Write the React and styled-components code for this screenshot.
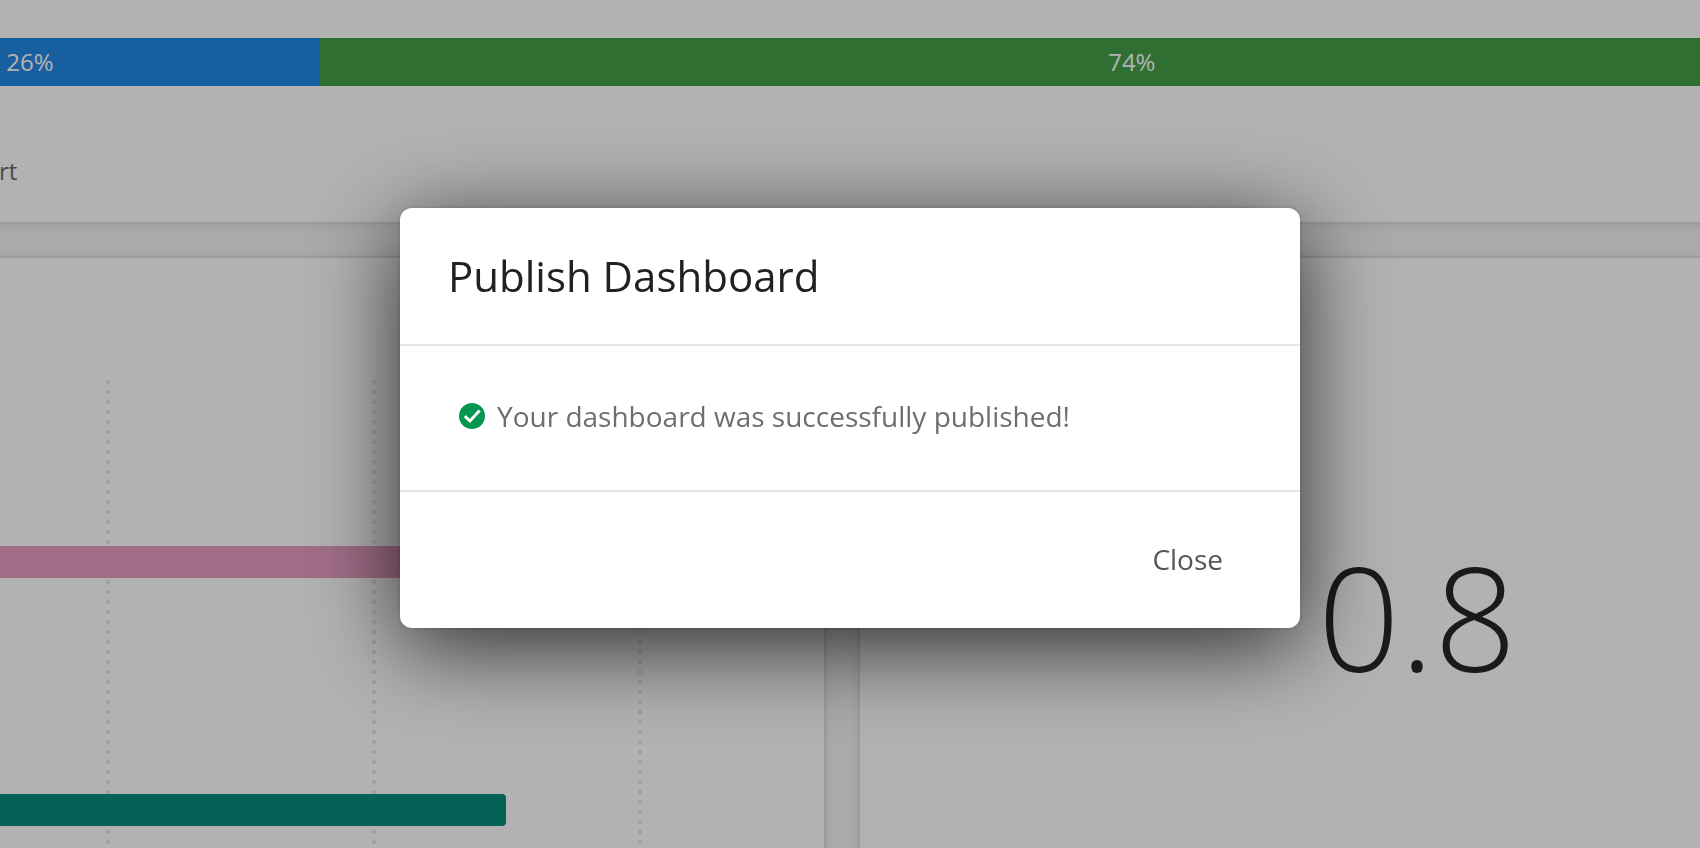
import React, { useState } from "react";
import styled, { createGlobalStyle } from "styled-components";

const GlobalStyle = createGlobalStyle`
  * {
    box-sizing: border-box;
  }
  body {
    margin: 0;
    background-color: #f4f4f4;
    font-family: "Open Sans", "Noto Sans", sans-serif;
  }
`

const Viewport = styled.main`
  height: 100vh;
  overflow: hidden;
`

/* the board is wider than the window and scrolled to its middle */
const Board = styled.div`
  display: grid;
  grid-template-columns: 1fr 1fr;
  gap: 36px;
  width: calc(100% + 564px);
  margin-left: -290px;
`

const Card = styled.section`
  min-width: 0;
  height: ${props => props.$height}px;
  grid-column: ${props => props.$wide ? "1 / -1" : "auto"};
  padding: ${props => props.$wide ? "38px" : "30px"} 30px 30px;
  background-color: #fff;
  box-shadow: 0 0 0 2px #dedede, 0 2px 12px rgba(0, 0, 0, 0.1);
`

const StackedBar = styled.div`
  display: flex;
  height: 48px;
`

const Segment = styled.div`
  display: flex;
  align-items: center;
  justify-content: center;
  padding-bottom: 2px;
  background-color: ${props => props.$color};
  color: #fff;
  font-size: 24px;
`

const Legend = styled.div`
  padding: 68px 0 0 259px;
  color: #6e6e6e;
  font-size: 24px;
  line-height: 34px;
`

const Plot = styled.svg`
  display: block;
  width: 100%;
  height: 100%;
`

const MetricCard = styled(Card)`
  display: flex;
  align-items: center;
  justify-content: center;
`

const Metric = styled.div`
  color: #262626;
  font-size: 144px;
  font-weight: 300;
  line-height: 196px;
`

const Backdrop = styled.div`
  position: fixed;
  inset: 0;
  display: flex;
  align-items: center;
  justify-content: center;
  padding-bottom: 12px;
  background-color: rgba(0, 0, 0, 0.3);
`

const Dialog = styled.div`
  width: 900px;
  max-width: 90%;
  border-radius: 12px;
  background-color: #fff;
  box-shadow: 0 0 0 2px rgba(0, 0, 0, 0.06), 0 18px 90px rgba(0, 0, 0, 0.76);
`

const DialogHeader = styled.header`
  padding: 40px 48px;
  border-bottom: 2px solid #e6e6e6;
`

const DialogTitle = styled.h2`
  margin: 0;
  color: #212121;
  font-size: 42px;
  font-weight: 400;
  line-height: 56px;
`

const DialogBody = styled.div`
  display: flex;
  align-items: center;
  gap: 12px;
  padding: 50px 59px 54px;
  color: #6e6e6e;
  font-size: 28px;
  line-height: 40px;
`

const DialogFooter = styled.footer`
  display: flex;
  justify-content: flex-end;
  padding: 32px 48px;
  border-top: 2px solid #e6e6e6;
`

const CloseButton = styled.button`
  height: 72px;
  padding: 0 29px 2px;
  border: 0;
  border-radius: 8px;
  background: none;
  color: #53565a;
  font-family: inherit;
  font-size: 28px;
  cursor: pointer;
`

const segments = [
  { value: 26.3, color: "#2388e6" },
  { value: 73.7, color: "#44a048" },
]

const gridLines = [102, 368, 634, 900]

const bars = [
  { y: 258, width: 760, color: "#e69dc2" },
  { y: 506, width: 664, color: "#098c7b" },
]

const SuccessIcon = () => (
  <svg width="26" height="26" viewBox="0 0 26 26" aria-hidden="true">
    <circle cx="13" cy="13" r="13" fill="#06964f" />
    <path d="M5.8 13.2 L11 18 L20.6 7.6" fill="none" stroke="#fff" strokeWidth="3" />
  </svg>
)

const BarPlot = () => (
  <Plot>
    {gridLines.map(x =>
      <line key={x} x1={x} x2={x} y1="94" y2="640" stroke="#e3e3e3" strokeWidth="4" strokeLinecap="round" strokeDasharray="0 10" />
    )}
    {bars.map(bar =>
      <rect key={bar.y} x="102" y={bar.y} width={bar.width} height="32" rx="4" fill={bar.color} />
    )}
  </Plot>
)

const App = () => {
  const [isOpen, setIsOpen] = useState(true)

  return (
    <>
      <GlobalStyle />
      <Viewport>
        <Board>
          <Card $wide $height={222}>
            <StackedBar>
              {segments.map(segment =>
                <Segment key={segment.color} $color={segment.color} style={{ width: `${segment.value}%` }}>
                  {Math.round(segment.value)}%
                </Segment>
              )}
            </StackedBar>
            <Legend>rt</Legend>
          </Card>
          <Card $height={716}>
            <BarPlot />
          </Card>
          <MetricCard $height={716}>
            <Metric>0.8</Metric>
          </MetricCard>
        </Board>
      </Viewport>
      {isOpen &&
        <Backdrop>
          <Dialog role="dialog" aria-modal="true" aria-labelledby="publish-title">
            <DialogHeader>
              <DialogTitle id="publish-title">Publish Dashboard</DialogTitle>
            </DialogHeader>
            <DialogBody>
              <SuccessIcon />
              Your dashboard was successfully published!
            </DialogBody>
            <DialogFooter>
              <CloseButton type="button" onClick={() => setIsOpen(false)}>Close</CloseButton>
            </DialogFooter>
          </Dialog>
        </Backdrop>
      }
    </>
  )
}

export default App;
